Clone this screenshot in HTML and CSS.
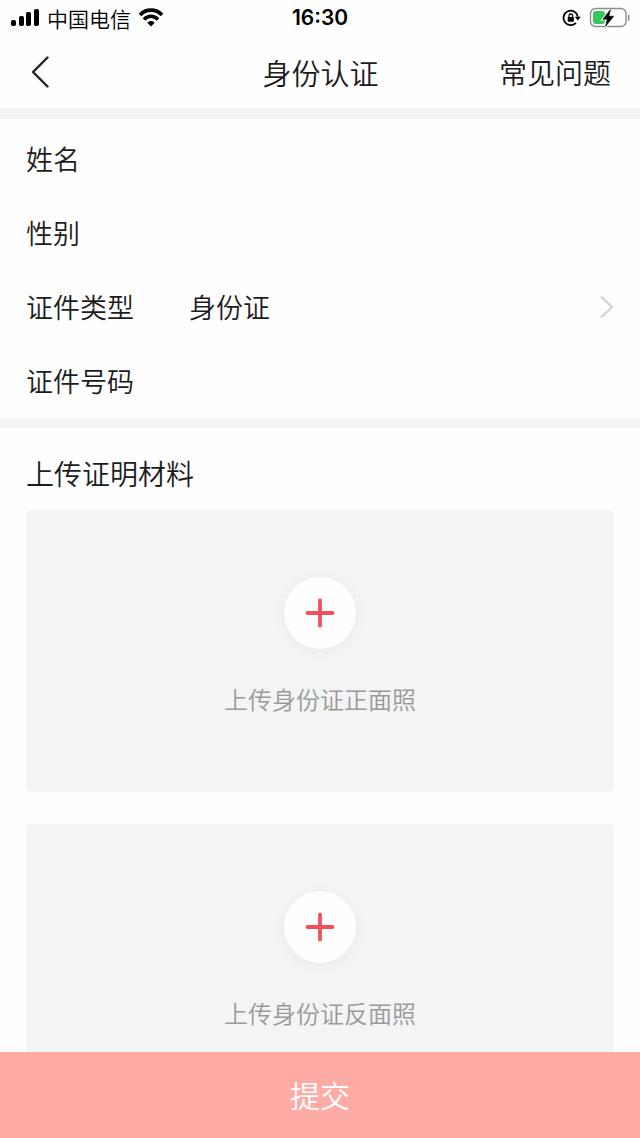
FILE: index.html
```
<!DOCTYPE html>
<html lang="zh-CN">
<head>
    <meta charset="UTF-8">
    <meta name="viewport" content="width=device-width, initial-scale=1.0">
    <title>身份认证</title>
    <link rel="stylesheet" href="styles.css">
</head>
<body>

    <!-- Status bar -->
    <div class="status-bar">
        <div class="status-left">
            <svg width="30" height="20" viewBox="0 0 30 20">
                <rect x="1" y="12" width="5" height="6" rx="1.8"/>
                <rect x="9" y="8" width="5" height="10" rx="1.8"/>
                <rect x="16" y="4" width="5" height="14" rx="1.8"/>
                <rect x="24" y="1" width="5" height="17" rx="1.8"/>
            </svg>
            <span class="carrier">中国电信</span>
            <svg width="26" height="20" viewBox="0 0 26 20">
                <path d="M2 7C8 0.5 18 0.5 24 7" fill="none" stroke="#000" stroke-width="3.6"/>
                <path d="M6 11.5C10 7.2 16 7.2 20 11.5" fill="none" stroke="#000" stroke-width="3.4"/>
                <path d="M9.3 14.7C11.4 12.5 14.6 12.5 16.7 14.7L13 18.5Z"/>
            </svg>
        </div>
        <span class="time">16:30</span>
        <div class="status-right">
            <svg width="19" height="18" viewBox="0 0 19 18">
                <path d="M15.8 7.6A7.2 7.2 0 1 0 14 13.8" fill="none" stroke="#000" stroke-width="1.8"/>
                <path d="M12.8 7.8H18.8L15.8 11.6Z"/>
                <rect x="5.7" y="8" width="6.2" height="4.8" rx="0.8"/>
                <path d="M7 8.4V6.8A1.8 1.8 0 0 1 10.6 6.8V8.4" fill="none" stroke="#000" stroke-width="1.3"/>
            </svg>
            <svg width="42" height="22" viewBox="0 0 42 22">
                <rect x="2.5" y="1.5" width="35.5" height="18" rx="5" fill="none" stroke="#8c8c8c" stroke-width="1.4"/>
                <path d="M40.7 8.5V13" fill="none" stroke="#8c8c8c" stroke-width="1.6" stroke-linecap="round"/>
                <rect x="5" y="4" width="12" height="13" rx="3" fill="#34c759"/>
                <path d="M22.5 2.6L14.9 12.2H19.3L17.6 19.2L25.8 9.2H20.8Z" stroke="#fefefe" stroke-width="2.4"/>
                <path d="M22.5 2.6L14.9 12.2H19.3L17.6 19.2L25.8 9.2H20.8Z" stroke="#000" stroke-width="0.6"/>
            </svg>
        </div>
    </div>

    <!-- Header -->
    <header class="header">
        <button type="button" class="back-btn" aria-label="返回">
            <svg width="20" height="34" viewBox="0 0 20 34">
                <path d="M17.5 2.5L3 17L17.5 31.5" fill="none" stroke="#222" stroke-width="2.4" stroke-linecap="round" stroke-linejoin="round"/>
            </svg>
        </button>
        <h1>身份认证</h1>
        <a href="#" class="faq-link">常见问题</a>
    </header>

    <!-- Main Content -->
    <main class="content">
        <form id="authForm" class="info">
            <div class="form-row">
                <label for="name">姓名</label>
                <input type="text" id="name">
            </div>
            <div class="form-row">
                <label for="gender">性别</label>
                <input type="text" id="gender">
            </div>
            <div class="form-row">
                <label for="idType">证件类型</label>
                <select id="idType">
                    <option>身份证</option>
                </select>
                <svg width="16" height="26" viewBox="0 0 16 26">
                    <path d="M3 2.5L14 13L3 23.5" fill="none" stroke="#d2d2d2" stroke-width="2.2"/>
                </svg>
            </div>
            <div class="form-row">
                <label for="idNumber">证件号码</label>
                <input type="text" id="idNumber">
            </div>
        </form>

        <section class="upload">
            <h2>上传证明材料</h2>
            <button type="button" class="upload-card">
                <span class="plus">
                    <svg width="30" height="30" viewBox="0 0 30 30">
                        <path d="M15 2.5V27.5M2.5 15H27.5" stroke="#f0525a" stroke-width="3.8" stroke-linecap="round"/>
                    </svg>
                </span>
                <span>上传身份证正面照</span>
            </button>
            <button type="button" class="upload-card">
                <span class="plus">
                    <svg width="30" height="30" viewBox="0 0 30 30">
                        <path d="M15 2.5V27.5M2.5 15H27.5" stroke="#f0525a" stroke-width="3.8" stroke-linecap="round"/>
                    </svg>
                </span>
                <span>上传身份证反面照</span>
            </button>
        </section>
    </main>

    <button type="submit" form="authForm" class="submit-btn">提交</button>

</body>
</html>
```
FILE: styles.css
```
* {
    box-sizing: border-box;
}

body {
    font-family: "Noto Sans CJK SC", sans-serif;
    font-weight: 350;
    margin: 0;
    height: 100vh;
    display: flex;
    flex-direction: column;
    background: #fefefe;
    color: #1c1c1c;
}

button, input, select {
    font: inherit;
    color: inherit;
    border: none;
    padding: 0;
    background: none;
}

button {
    cursor: pointer;
}

svg {
    display: block;
    flex: none;
}

/* Status bar */
.status-bar {
    display: grid;
    grid-template-columns: 1fr auto 1fr;
    align-items: center;
    height: 35px;
    padding: 0 10px;
    color: #000;
}

.status-left, .status-right {
    display: flex;
    align-items: center;
    gap: 7px;
}

.status-right {
    justify-content: flex-end;
}

.carrier {
    font-size: 21px;
    line-height: 24px;
}

.time {
    font-family: Inter, sans-serif;
    font-size: 21px;
    line-height: 24px;
    font-weight: 600;
}

/* Header */
.header {
    display: grid;
    grid-template-columns: 1fr auto 1fr;
    align-items: center;
    height: 73px;
    padding: 0 29px 0 30px;
}

.back-btn {
    justify-self: start;
}

h1 {
    margin: 0;
    font-size: 29px;
    line-height: 40px;
    font-weight: inherit;
}

.faq-link {
    justify-self: end;
    font-size: 28px;
    line-height: 40px;
    color: inherit;
    text-decoration: none;
}

/* Main Content */
.content {
    flex: 1;
    min-height: 0;
    overflow-y: auto;
    scrollbar-width: none;
}

.info {
    padding-top: 3px;
    border-top: 11px solid #f4f4f4;
    border-bottom: 10px solid #f3f5f4;
}

.form-row {
    display: flex;
    align-items: center;
    height: 74px;
    padding: 0 26px;
    font-size: 27px;
    line-height: 40px;
}

.form-row label {
    width: 163px;
}

.form-row input, .form-row select {
    flex: 1;
    min-width: 0;
    height: 40px;
    outline: none;
    appearance: none;
}

/* Upload */
.upload {
    display: flex;
    flex-direction: column;
    padding: 25px 26px 32px;
}

h2 {
    margin: 0 0 17px;
    font-size: 28px;
    line-height: 40px;
    font-weight: inherit;
}

.upload-card {
    display: flex;
    flex-direction: column;
    align-items: center;
    gap: 34px;
    height: 282px;
    padding-top: 67px;
    border-radius: 5px;
    background: #f3f5f4;
    color: #999;
    font-size: 24px;
    line-height: 32px;
}

.upload-card + .upload-card {
    margin-top: 32px;
}

.plus {
    display: flex;
    align-items: center;
    justify-content: center;
    width: 72px;
    height: 72px;
    border-radius: 50%;
    background: #fefefe;
    box-shadow: 0 2px 14px rgba(0, 0, 0, 0.05);
}

/* Submit */
.submit-btn {
    flex: none;
    height: 86px;
    padding-bottom: 2px;
    background: #ffaba5;
    color: #fff;
    font-size: 30px;
}
```
